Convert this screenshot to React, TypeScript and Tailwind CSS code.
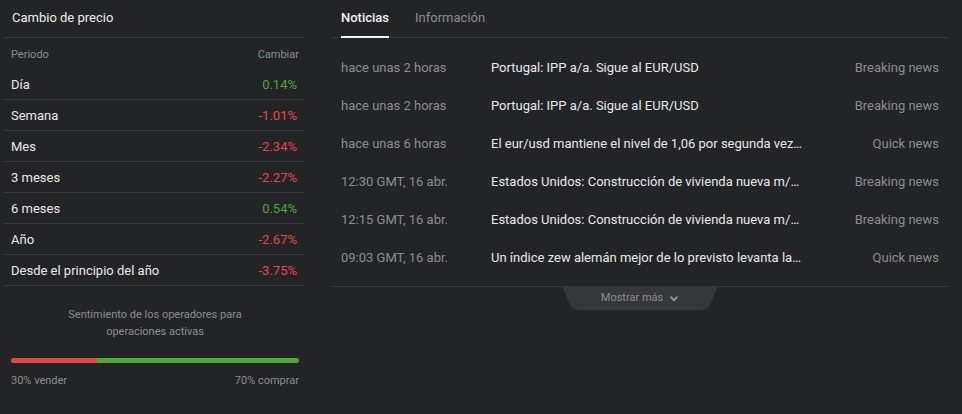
const periods = [
  { label: "Día", value: "0.14%", up: true },
  { label: "Semana", value: "-1.01%", up: false },
  { label: "Mes", value: "-2.34%", up: false },
  { label: "3 meses", value: "-2.27%", up: false },
  { label: "6 meses", value: "0.54%", up: true },
  { label: "Año", value: "-2.67%", up: false },
  { label: "Desde el principio del año", value: "-3.75%", up: false },
];

const news = [
  { time: "hace unas 2 horas", title: "Portugal: IPP a/a. Sigue al EUR/USD", kind: "Breaking news" },
  { time: "hace unas 2 horas", title: "Portugal: IPP a/a. Sigue al EUR/USD", kind: "Breaking news" },
  { time: "hace unas 6 horas", title: "El eur/usd mantiene el nivel de 1,06 por segunda vez consecutiva", kind: "Quick news" },
  { time: "12:30 GMT, 16 abr.", title: "Estados Unidos: Construcción de vivienda nueva m/m. Sigue al EUR/USD", kind: "Breaking news" },
  { time: "12:15 GMT, 16 abr.", title: "Estados Unidos: Construcción de vivienda nueva m/m. Sigue al EUR/USD", kind: "Breaking news" },
  { time: "09:03 GMT, 16 abr.", title: "Un índice zew alemán mejor de lo previsto levanta la moneda única", kind: "Quick news" },
];

export default function App() {
  return (
    <div className="flex h-[414px] w-[962px] bg-[#232427] font-['Roboto',sans-serif] text-[13px] text-[#e9eaec]">
      {/* price change */}
      <section className="w-[308px] shrink-0 px-[3px]">
        <div className="flex h-[38px] items-center border-b border-[#37383b] pl-[9px] pb-px text-[13px] text-[#eceef0]">
          Cambio de precio
        </div>
        <div className="flex h-[31px] items-center justify-between pl-[8px] pr-[6px] pt-[4px] text-[11px] text-[#8b8e92]">
          <span>Periodo</span>
          <span>Cambiar</span>
        </div>
        {periods.map((p) => (
          <div
            key={p.label}
            className="flex h-[31px] items-center justify-between border-b border-[#37383b] pl-[8px] pr-[8px] pt-[2px]"
          >
            <span>{p.label}</span>
            <span className={p.up ? "text-[#4ea83c]" : "text-[#e5474b]"}>{p.value}</span>
          </div>
        ))}
        <div className="pl-[8px] pr-[6px] pt-[20px]">
          <p className="mx-auto w-[200px] text-center text-[11px] leading-[17px] text-[#8b8e92]">
            Sentimiento de los operadores para operaciones activas
          </p>
          <div className="mt-[18px] flex h-[5px] w-full overflow-hidden rounded-full">
            <div className="w-[30%] bg-[#e24848]" />
            <div className="flex-1 bg-[#4ea83c]" />
          </div>
          <div className="mt-[10px] flex justify-between text-[11px] text-[#8b8e92]">
            <span>30% vender</span>
            <span>70% comprar</span>
          </div>
        </div>
      </section>

      {/* news */}
      <section className="ml-[23px] w-[618px] shrink-0">
        <div className="flex h-[38px] items-stretch gap-[26px] border-b border-[#37383b] px-[10px]">
          <div className="relative flex items-center pb-px font-medium text-[#f2f3f5]">
            Noticias
            <div className="absolute bottom-[-1px] left-0 right-0 h-[2px] bg-[#f2f3f5]" />
          </div>
          <div className="flex items-center pb-px text-[#8b8e92]">Información</div>
        </div>
        <div className="border-b border-[#37383b] pb-[9px] pt-[11px]">
          {news.map((n, i) => (
            <div key={i} className="flex h-[38px] items-center px-[10px]">
              <span className="w-[150px] shrink-0 text-[#8b8e92]">{n.time}</span>
              <span className="w-[312px] truncate">{n.title}</span>
              <span className="ml-auto text-[#8b8e92]">{n.kind}</span>
            </div>
          ))}
        </div>
        <div className="flex justify-center">
          <button className="relative -mt-px flex h-[25px] w-[156px] items-center justify-center gap-[6px] text-[11px] text-[#8b8e92]">
            <svg className="absolute inset-0" width="156" height="25" viewBox="0 0 156 25">
              <path d="M0 0 H156 L148 19 Q145.5 24 140 24 H16 Q10.5 24 8 19 Z" fill="#36373a" />
            </svg>
            <span className="relative">Mostrar más</span>
            <svg className="relative" width="10" height="10" viewBox="0 0 24 24">
              <path d="M5 8 L12 15 L19 8" fill="none" stroke="#8b8e92" strokeWidth="5" strokeLinecap="round" strokeLinejoin="round" />
            </svg>
          </button>
        </div>
      </section>
    </div>
  );
}
